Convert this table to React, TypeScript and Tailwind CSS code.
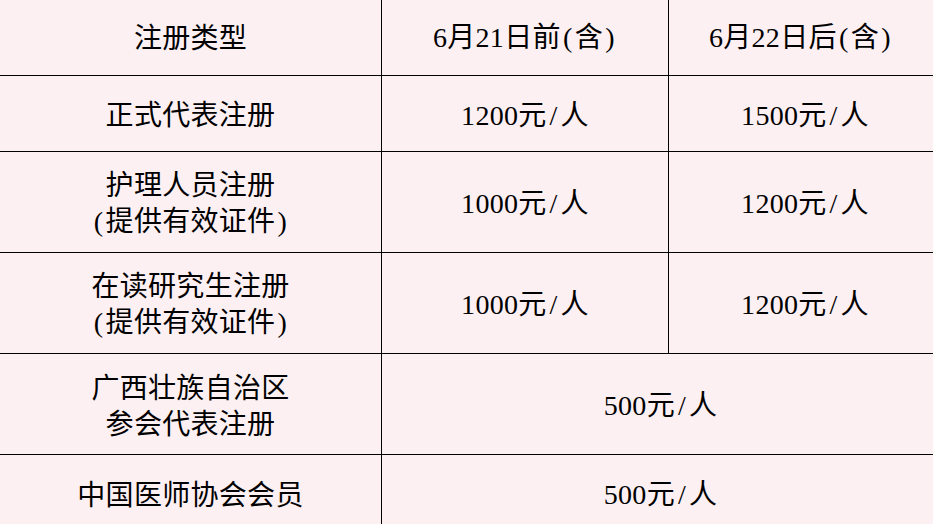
import React from "react";

const H = ({ c }: { c: string }) => (
  <span className="inline-block w-[14px] text-center">{c}</span>
);

function T({ s }: { s: string }) {
  const parts: React.ReactNode[] = [];
  let buf = "";
  let k = 0;
  for (const ch of s) {
    if (ch === "/" || ch === "(" || ch === ")") {
      if (buf) parts.push(<span key={k++}>{buf}</span>);
      buf = "";
      parts.push(<H key={k++} c={ch} />);
    } else buf += ch;
  }
  if (buf) parts.push(<span key={k++}>{buf}</span>);
  return <>{parts}</>;
}

const cell =
  "flex flex-col items-center justify-center text-center border-black";

export default function App() {
  return (
    <div
      className="w-[933px] h-[524px] overflow-hidden bg-[#fdf0f3] text-black text-[28px] leading-[36px] tracking-[0.3px]"
      style={{ fontFamily: "'Liberation Serif', 'Noto Sans CJK SC', serif" }}
    >
      <div className="grid grid-cols-[382px_287px_1fr] grid-rows-[76px_76px_101px_101px_101px_1fr] h-full">
        <div className={`${cell} border-r border-b pt-[2px]`}>
          <T s="注册类型" />
        </div>
        <div className={`${cell} border-r border-b`}>
          <div>
            <T s="6月21日前(含)" />
          </div>
        </div>
        <div className={`${cell} border-b`}>
          <div>
            <T s="6月22日后(含)" />
          </div>
        </div>

        <div className={`${cell} border-r border-b pt-[4px]`}>
          <div>正式代表注册</div>
        </div>
        <div className={`${cell} border-r border-b pt-[4px]`}>
          <div>
            <T s="1200元/人" />
          </div>
        </div>
        <div className={`${cell} border-b pt-[4px] pl-[8px]`}>
          <div>
            <T s="1500元/人" />
          </div>
        </div>

        <div className={`${cell} border-r border-b pt-[4px]`}>
          <div>护理人员注册</div>
          <div>
            <T s="(提供有效证件)" />
          </div>
        </div>
        <div className={`${cell} border-r border-b pt-[4px]`}>
          <div>
            <T s="1000元/人" />
          </div>
        </div>
        <div className={`${cell} border-b pt-[4px] pl-[8px]`}>
          <div>
            <T s="1200元/人" />
          </div>
        </div>

        <div className={`${cell} border-r border-b pt-[3px]`}>
          <div>在读研究生注册</div>
          <div>
            <T s="(提供有效证件)" />
          </div>
        </div>
        <div className={`${cell} border-r border-b pt-[3px]`}>
          <div>
            <T s="1000元/人" />
          </div>
        </div>
        <div className={`${cell} border-b pt-[3px] pl-[8px]`}>
          <div>
            <T s="1200元/人" />
          </div>
        </div>

        <div className={`${cell} border-r border-b pt-[6px]`}>
          <div>广西壮族自治区</div>
          <div>参会代表注册</div>
        </div>
        <div className={`${cell} col-span-2 border-b pt-[4px] pl-[6px]`}>
          <div>
            <T s="500元/人" />
          </div>
        </div>

        <div className={`${cell} border-r pt-[12px]`}>
          <div>中国医师协会会员</div>
        </div>
        <div className={`${cell} col-span-2 pt-[10px] pl-[6px]`}>
          <div>
            <T s="500元/人" />
          </div>
        </div>
      </div>
    </div>
  );
}
